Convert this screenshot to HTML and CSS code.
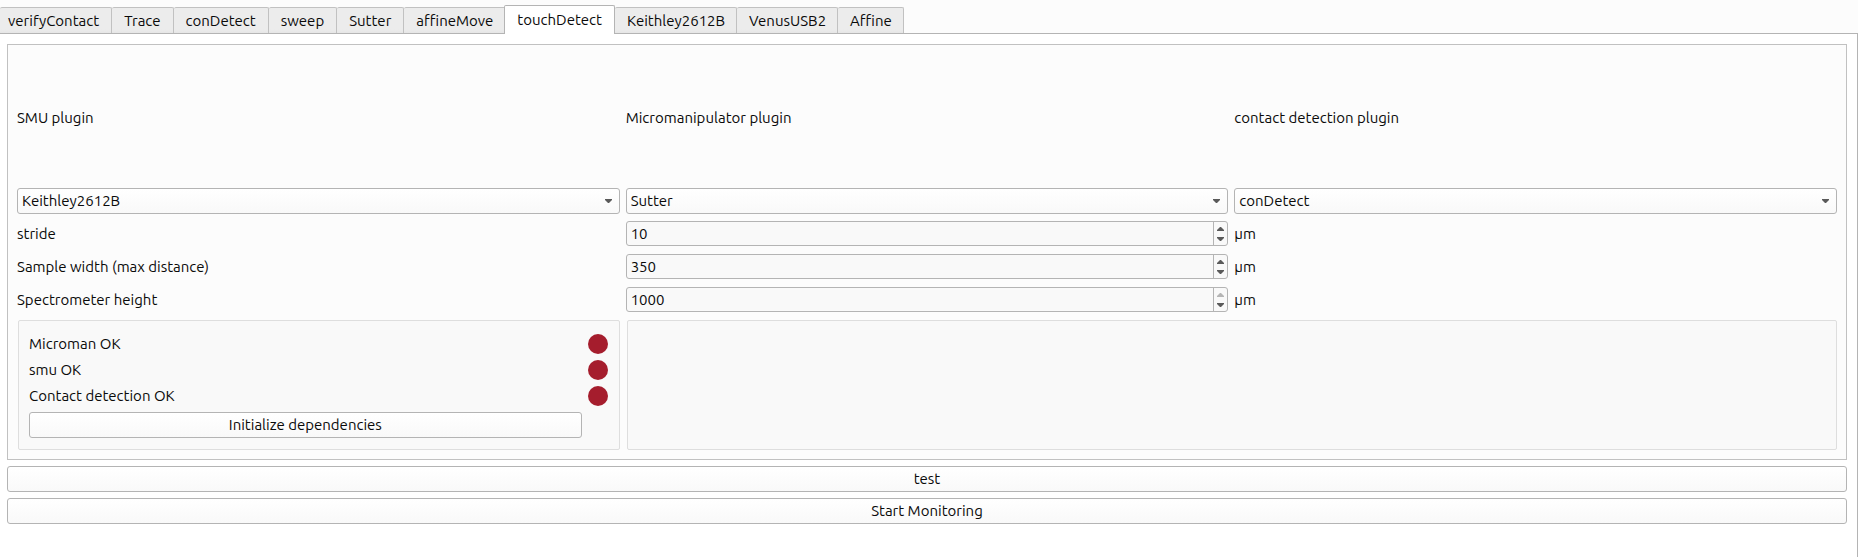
FILE: index.html
```
<!DOCTYPE html>
<html lang="en">
<head>
<meta charset="utf-8">
<title>touchDetect</title>
<link rel="stylesheet" href="styles.css">
</head>
<body class="app">
<svg class="defs" aria-hidden="true">
  <symbol id="down" viewBox="0 0 7 4"><path d="M0 0h7v1L4 4H3L0 1z"/></symbol>
  <symbol id="up" viewBox="0 0 7 4"><path d="M3 0h1l3 3v1H0V3z"/></symbol>
</svg>
<nav class="tabs" role="tablist">
  <button class="tab" role="tab">verifyContact</button>
  <button class="tab" role="tab">Trace</button>
  <button class="tab" role="tab">conDetect</button>
  <button class="tab" role="tab">sweep</button>
  <button class="tab" role="tab">Sutter</button>
  <button class="tab" role="tab">affineMove</button>
  <button class="tab tab-selected" role="tab" aria-selected="true">touchDetect</button>
  <button class="tab" role="tab">Keithley2612B</button>
  <button class="tab" role="tab">VenusUSB2</button>
  <button class="tab" role="tab">Affine</button>
</nav>
<main class="pane">
  <section class="panel">
    <label class="heading" for="smu">SMU plugin</label>
    <label class="heading" for="micro">Micromanipulator plugin</label>
    <label class="heading" for="contact">contact detection plugin</label>

    <div class="combo"><select class="combo-input" id="smu"><option>Keithley2612B</option></select><svg class="combo-arrow"><use href="#down"/></svg></div>
    <div class="combo"><select class="combo-input" id="micro"><option>Sutter</option></select><svg class="combo-arrow"><use href="#down"/></svg></div>
    <div class="combo"><select class="combo-input" id="contact"><option>conDetect</option></select><svg class="combo-arrow"><use href="#down"/></svg></div>

    <label class="cell" for="stride">stride</label>
    <div class="spin">
      <input class="spin-input" id="stride" type="text" inputmode="numeric" value="10">
      <div class="spin-buttons">
        <button class="step" aria-label="Increase stride"><svg class="arrow"><use href="#up"/></svg></button>
        <button class="step" aria-label="Decrease stride"><svg class="arrow"><use href="#down"/></svg></button>
      </div>
    </div>
    <span class="cell">µm</span>

    <label class="cell" for="width">Sample width (max distance)</label>
    <div class="spin">
      <input class="spin-input" id="width" type="text" inputmode="numeric" value="350">
      <div class="spin-buttons">
        <button class="step" aria-label="Increase width"><svg class="arrow"><use href="#up"/></svg></button>
        <button class="step" aria-label="Decrease width"><svg class="arrow"><use href="#down"/></svg></button>
      </div>
    </div>
    <span class="cell">µm</span>

    <label class="cell" for="height">Spectrometer height</label>
    <div class="spin">
      <input class="spin-input" id="height" type="text" inputmode="numeric" value="1000">
      <div class="spin-buttons">
        <button class="step" aria-label="Increase height" disabled><svg class="arrow"><use href="#up"/></svg></button>
        <button class="step" aria-label="Decrease height"><svg class="arrow"><use href="#down"/></svg></button>
      </div>
    </div>
    <span class="cell">µm</span>

    <div class="group">
      <span>Microman OK</span><span class="led"></span>
      <span>smu OK</span><span class="led"></span>
      <span>Contact detection OK</span><span class="led"></span>
      <button class="push">Initialize dependencies</button>
    </div>
    <div class="group group-wide"></div>
  </section>
  <button class="push">test</button>
  <button class="push">Start Monitoring</button>
</main>
</body>
</html>
```
FILE: styles.css
```
* {
  box-sizing: border-box;
}

.app {
  display: flex;
  flex-direction: column;
  min-height: 100vh;
  margin: 0;
  background: #fcfcfc;
  color: #0a0a0a;
  font: 15px/20px Ubuntu, "Noto Sans", sans-serif;
}

.defs {
  display: none;
}

button,
input,
select {
  margin: 0;
  color: inherit;
  font: inherit;
}

.tabs {
  display: flex;
  align-items: flex-end;
  padding-top: 5px;
}

.tab {
  height: 26px;
  padding: 0 12px;
  border: solid #c1c1c1;
  border-width: 1px 1px 0 0;
  border-radius: 2px 2px 0 0;
  background: linear-gradient(#ececec 85%, #e6e6e6);
}

.tab:first-child {
  padding-left: 8px;
}

.tab-selected {
  z-index: 1;
  height: 29px;
  margin: 0 0 -1px -2px;
  border-color: #b4b4b4;
  border-left-width: 1px;
  background: #fff;
}

.tab-selected ~ .tab {
  padding-right: 11px;
}

.pane {
  display: flex;
  flex: 1;
  flex-direction: column;
  gap: 6px;
  padding: 10px 10px 10px 7px;
  border: solid #b4b4b4;
  border-width: 1px 1px 0 0;
  background: #fff;
}

.panel {
  display: grid;
  grid-template-columns: repeat(3, minmax(0, 1fr));
  gap: 6px;
  padding: 9px;
  border: 1px solid #c1c1c1;
  background: #fcfcfc;
}

.heading {
  padding: 54px 0;
}

.cell {
  padding: 4px 0 3px;
}

.combo {
  position: relative;
  display: flex;
}

.combo-input {
  width: 100%;
  height: 26px;
  padding: 0 20px 0 4px;
  appearance: none;
  border: 1px solid #b4b4b4;
  border-radius: 3px;
  background: linear-gradient(#fff, #f9f9f9);
}

.combo-arrow {
  position: absolute;
  top: 11px;
  right: 8px;
  width: 7px;
  height: 4px;
  fill: #5a5a5a;
  pointer-events: none;
}

.spin {
  display: flex;
  height: 25px;
  margin-top: 1px;
  border: 1px solid #b4b4b4;
  border-radius: 3px;
  background: #f9f9f9;
}

.spin-input {
  flex: 1;
  min-width: 0;
  padding: 0 4px;
  border: 0;
  background: none;
}

.spin-buttons {
  display: flex;
  flex-direction: column;
  justify-content: center;
  gap: 2px;
  width: 14px;
  border-left: 1px solid #b4b4b4;
}

.step {
  display: flex;
  align-items: center;
  justify-content: center;
  height: 8px;
  padding: 0;
  border: 0;
  background: none;
}

.arrow {
  width: 7px;
  height: 4px;
  fill: #5a5a5a;
}

.step:disabled .arrow {
  fill: #b5b5b5;
}

.group {
  display: grid;
  grid-template-columns: 1fr 21px;
  gap: 6px;
  margin: 1px 0 0 1px;
  padding: 13px 10px 11px;
  border: 1px solid #dedede;
  border-radius: 2px;
  background: #f9f9f9;
}

.group-wide {
  grid-column: span 2;
}

.led {
  width: 20px;
  height: 20px;
  border-radius: 50%;
  background: #a51d2d;
}

.push {
  height: 26px;
  padding: 0 8px;
  border: 1px solid #b4b4b4;
  border-radius: 3px;
  background: linear-gradient(#fff, #f9f9f9);
}
```
